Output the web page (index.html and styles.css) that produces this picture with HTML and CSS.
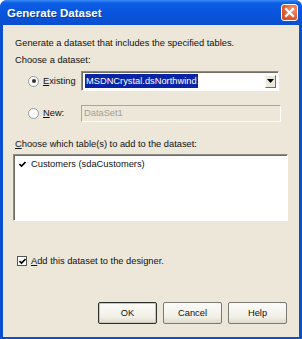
FILE: index.html
```html
<!DOCTYPE html>
<html>
<head>
<meta charset="utf-8">
<link rel="stylesheet" href="styles.css">
</head>
<body>
<div class="window">
  <div class="titlebar">
    <span class="title">Generate Dataset</span>
    <span class="close"><svg width="15" height="15" viewBox="0 0 15 15"><path d="M4 4 L11 11 M11 4 L4 11" stroke="#fff" stroke-width="2.2" stroke-linecap="square"/></svg></span>
  </div>
  <div class="client">
    <div class="intro">Generate a dataset that includes the specified tables.</div>
    <div class="label">Choose a dataset:</div>
    <div class="row existing">
      <span class="radio checked"></span>
      <span class="rlabel"><u>E</u>xisting</span>
      <div class="combo">
        <span class="sel">MSDNCrystal.dsNorthwind</span>
        <span class="ddbtn"><svg width="7" height="4" viewBox="0 0 7 4"><path d="M0 0 H7 L3.5 4 Z" fill="#000"/></svg></span>
      </div>
    </div>
    <div class="row newrow">
      <span class="radio"></span>
      <span class="rlabel"><u>N</u>ew:</span>
      <div class="textbox">DataSet1</div>
    </div>
    <div class="label tables"><u>C</u>hoose which table(s) to add to the dataset:</div>
    <div class="listbox">
      <div class="item"><span class="check small"><svg width="7" height="7" viewBox="0 0 7 7"><path d="M0.5 3 L2.5 5 L6.5 1" stroke="#000" stroke-width="1.6" fill="none"/></svg></span>Customers (sdaCustomers)</div>
    </div>
    <div class="addrow">
      <span class="check"><svg width="7" height="7" viewBox="0 0 7 7"><path d="M0.5 3 L2.5 5 L6.5 1" stroke="#000" stroke-width="1.6" fill="none"/></svg></span>
      <span><u>A</u>dd this dataset to the designer.</span>
    </div>
    <div class="buttons">
      <div class="btn default">OK</div>
      <div class="btn">Cancel</div>
      <div class="btn">Help</div>
    </div>
  </div>
</div>
</body>
</html>
```
FILE: styles.css
```css
html, body { margin: 0; padding: 0; background: #fff; }
body { width: 302px; height: 339px; overflow: hidden; font-family: "Liberation Sans", Arial, sans-serif; font-size: 9.3px; color: #111; }
.window { width: 302px; height: 339px; box-sizing: border-box; display: flex; flex-direction: column; background: #0a4fd0; border-radius: 7px 7px 0 0; overflow: hidden; }
.titlebar { height: 25px; flex: none; display: flex; align-items: center; justify-content: space-between; padding: 0 4px 0 7px; background: linear-gradient(#3d8df7 0px, #0b5ee6 3px, #0955dd 12px, #0a4fcf 24px); }
.title { color: #fff; font-weight: bold; font-size: 11.5px; font-family: "Liberation Sans", Arial, sans-serif; text-shadow: 1px 1px 0 #0a3a9a; }
.close { width: 15px; height: 15px; border: 1px solid #fff; border-radius: 3px; background: radial-gradient(circle at 70% 30%, #f59a7c, #e4582c 60%, #c9401f); display: flex; align-items: center; justify-content: center; }
.close svg { display: block; }
.client { flex: 1; margin: 0 3px 2px 3px; background: #ece7d9; padding: 0 0 0 12px; display: flex; flex-direction: column; }
.intro { margin-top: 12px; height: 12px; line-height: 12px; }
.label { margin-top: 5px; height: 12px; line-height: 12px; }
.row { display: flex; align-items: center; height: 20px; }
.existing { margin-top: 5px; }
.newrow { margin-top: 12px; }
.radio { width: 11px; height: 11px; border-radius: 50%; box-sizing: border-box; border: 1px solid #8b9aa8; background: #fbfbf8; margin-left: 13px; position: relative; flex: none; }
.radio.checked::after { content: ""; position: absolute; left: 2.5px; top: 2.5px; width: 4px; height: 4px; border-radius: 50%; background: #333; }
.rlabel { margin-left: 4px; width: 38px; flex: none; }
.combo { width: 198px; height: 20px; box-sizing: border-box; border: 1px solid; border-color: #8e8b84 #fff #fff #8e8b84; box-shadow: inset 1px 1px 0 #716f64; background: #fff; display: flex; align-items: center; justify-content: space-between; padding: 0 2px 0 3px; }
.sel { background: #0a24a8; color: #fff; padding: 1px 1px; line-height: 12px; }
.ddbtn { width: 11px; height: 13px; background: #ece9d8; box-sizing: border-box; border: 1px solid; border-color: #fff #716f64 #716f64 #fff; display: flex; align-items: center; justify-content: center; }
.ddbtn svg { display: block; }
.textbox { width: 200px; height: 17px; box-sizing: border-box; border: 1px solid; border-color: #a8a59a #fff #fff #a8a59a; background: #ece7d9; color: #a19e92; line-height: 15px; padding-left: 2px; }
.tables { margin-top: 15px; }
.listbox { margin-top: 4px; margin-left: -2px; width: 275px; height: 67px; box-sizing: border-box; border: 1px solid; border-color: #8e8b84 #fff #fff #8e8b84; box-shadow: inset 1px 1px 0 #716f64; background: #fff; padding: 3px 0 0 3px; }
.item { display: flex; align-items: center; height: 12px; }
.check { width: 10px; height: 10px; box-sizing: border-box; border: 1px solid #555; background: #fff; display: inline-flex; align-items: center; justify-content: center; margin-right: 4px; flex: none; }
.check svg { display: block; }
.check.small { border-color: #fff; }
.addrow { margin-top: 34px; margin-left: 2px; display: flex; align-items: center; height: 12px; }
.buttons { margin-top: 35px; display: flex; gap: 6px; justify-content: flex-end; padding-right: 12px; }
.btn { width: 59px; height: 22px; box-sizing: border-box; border: 1px solid #7b7a76; border-radius: 2px; background: linear-gradient(#fbfbf9, #f1efe6 70%, #ddd9cc); display: flex; align-items: center; justify-content: center; }
.btn.default { border-color: #2f2f2f; box-shadow: inset 0 0 0 1px #c9c6bb; }
```
